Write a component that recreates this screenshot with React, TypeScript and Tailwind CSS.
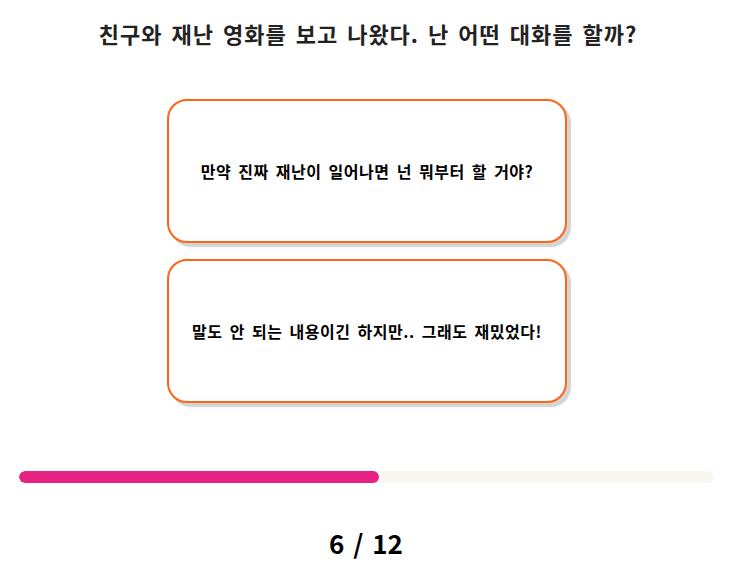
const options = [
  '만약 진짜 재난이 일어나면 넌 뭐부터 할 거야?',
  '말도 안 되는 내용이긴 하지만.. 그래도 재밌었다!',
]

export default function App() {
  const current = 6
  const total = 12

  return (
    <div className="w-[732px] h-[580px] bg-white flex flex-col items-center font-['Noto_Sans_CJK_KR','Noto_Sans',sans-serif] text-[#222]">
      <h1 className="mt-[18px] pl-[4px] text-[22px] leading-[30px] font-bold tracking-[1px] [word-spacing:3px]">
        친구와 재난 영화를 보고 나왔다. 난 어떤 대화를 할까?
      </h1>

      <div className="mt-[51px] pl-[2px] flex flex-col gap-4">
        {options.map((text) => (
          <button
            key={text}
            className="w-[400px] h-[144px] bg-white border-2 border-[#ff6414] rounded-[20px] shadow-[4px_4px_1px_#d4d4d4] flex items-center justify-center text-[16px] font-bold text-black tracking-[0.5px] [word-spacing:3px]"
          >
            {text}
          </button>
        ))}
      </div>

      <div className="mt-[68px] w-[695px] h-3 rounded-full bg-[#faf6f2] overflow-hidden">
        <div
          className="h-full rounded-full bg-[#e62383]"
          style={{ width: '360px' }}
        />
      </div>

      <div className="mt-[43px] text-[26px] leading-[34px] font-bold text-black [word-spacing:3px]">
        {current} / {total}
      </div>
    </div>
  )
}
